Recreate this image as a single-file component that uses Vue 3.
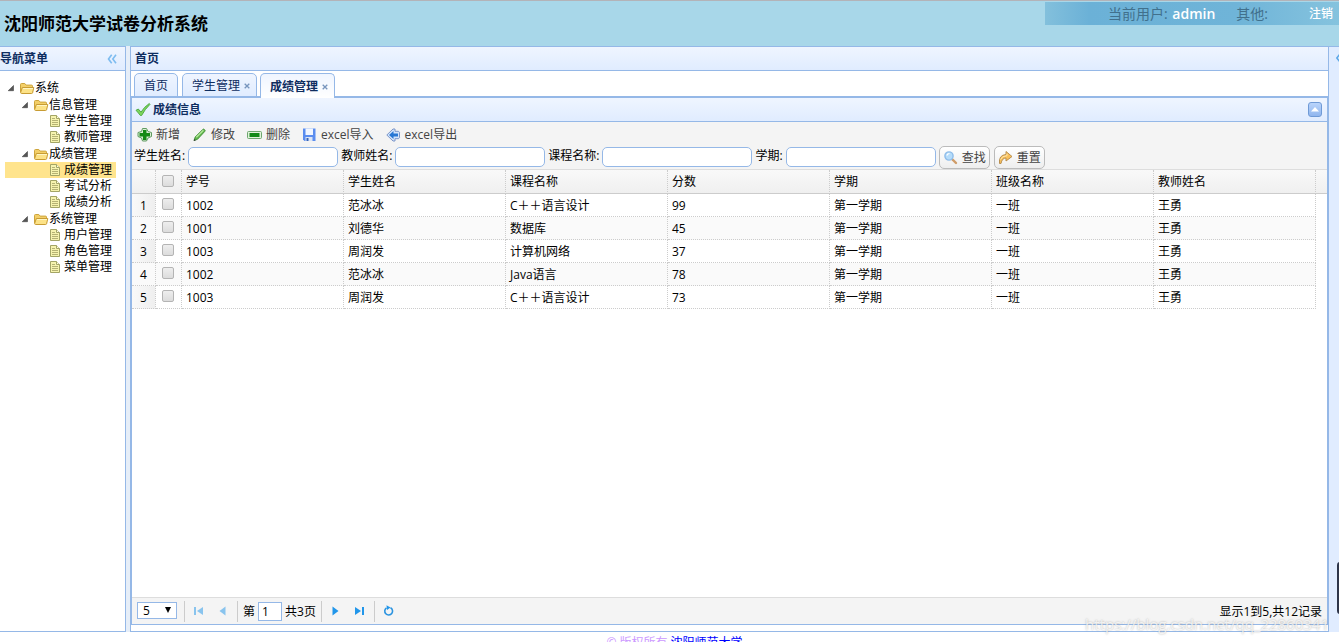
<script setup>
import { ref } from 'vue'

const tree = [
  { label: '系统', level: 0, folder: true },
  { label: '信息管理', level: 1, folder: true },
  { label: '学生管理', level: 2 },
  { label: '教师管理', level: 2 },
  { label: '成绩管理', level: 1, folder: true },
  { label: '成绩管理', level: 2, selected: true },
  { label: '考试分析', level: 2 },
  { label: '成绩分析', level: 2 },
  { label: '系统管理', level: 1, folder: true },
  { label: '用户管理', level: 2 },
  { label: '角色管理', level: 2 },
  { label: '菜单管理', level: 2 }
]

const tabs = [
  { label: '首页', closable: false },
  { label: '学生管理', closable: true },
  { label: '成绩管理', closable: true, active: true }
]

const tools = [
  { icon: 'add', label: '新增' },
  { icon: 'edit', label: '修改' },
  { icon: 'remove', label: '删除' },
  { icon: 'save', label: 'excel导入' },
  { icon: 'back', label: 'excel导出' }
]

const filters = [
  { id: 'student', label: '学生姓名:' },
  { id: 'teacher', label: '教师姓名:' },
  { id: 'course', label: '课程名称:' },
  { id: 'term', label: '学期:' }
]

const columns = ['学号', '学生姓名', '课程名称', '分数', '学期', '班级名称', '教师姓名']
const rows = [
  ['1002', '范冰冰', 'C＋＋语言设计', '99', '第一学期', '一班', '王勇'],
  ['1001', '刘德华', '数据库', '45', '第一学期', '一班', '王勇'],
  ['1003', '周润发', '计算机网络', '37', '第一学期', '一班', '王勇'],
  ['1002', '范冰冰', 'Java语言', '78', '第一学期', '一班', '王勇'],
  ['1003', '周润发', 'C＋＋语言设计', '73', '第一学期', '一班', '王勇']
]

const page = ref('1')
</script>

<template>
  <div class="page">
    <header class="top">
      <h1>沈阳师范大学试卷分析系统</h1>
      <div class="userbar">
        <span>当前用户: <b>admin</b></span>
        <span>其他:</span>
        <a href="#" class="logout">注销</a>
      </div>
    </header>

    <div class="body">
      <nav class="west">
        <div class="phead">
          <span>导航菜单</span>
          <button class="chev" aria-label="收起">
            <svg width="10" height="10" viewBox="0 0 10 10" fill="none" stroke="#7dbcf0" stroke-width="1.6"><path d="M4.7.8 1.500 5l3.200 4.200M9 .8 5.800 5 9 9.200" /></svg>
          </button>
        </div>
        <ul class="tree">
          <li v-for="(n, i) in tree" :key="i" :class="['l' + n.level, { selected: n.selected }]">
            <svg v-if="n.folder" width="14" height="16" viewBox="0 0 14 16"><path d="M8.500 5.500v5.200H3.200z" fill="#555" stroke="#444" stroke-width=".6" /></svg>
            <svg v-if="n.folder" width="16" height="16" viewBox="0 0 16 16">
              <path d="M1.500 12V4.500q0-1 1-1h3.300l1.400 1.600h5.300q1 0 1 1V12z" fill="#f3cf68" stroke="#cda43c" />
              <path d="M1.700 12.300 3.300 7.500h11.500l-1.200 5.300q-.2.700-1 .7H2.500q-.9 0-.8-1.200z" fill="#fce287" stroke="#c89c34" />
              <path d="M4 8.500h10" stroke="#fff6c4" />
            </svg>
            <svg v-else width="16" height="16" viewBox="0 0 16 16">
              <path d="M3.500 2.500h6l3 3v8h-9z" fill="#f6f3ae" stroke="#a3a566" />
              <path d="M9.500 2.500v3h3" fill="#fffde0" stroke="#a3a566" />
              <path d="M5 5.500h3M5 7.500h6M5 9.500h6M5 11.500h6" stroke="#b5b274" />
            </svg>
            <span>{{ n.label }}</span>
          </li>
        </ul>
      </nav>

      <main class="center">
        <div class="phead inset">首页</div>
        <div class="tabs">
          <button v-for="(t, i) in tabs" :key="i" :class="['tab', { active: t.active }]">
            <span>{{ t.label }}</span>
            <svg v-if="t.closable" width="6" height="6" viewBox="0 0 6 6"><path d="M.7.700l4.600 4.600M5.300.7.700 5.300" stroke="#7795bd" stroke-width="1.300" /></svg>
          </button>
        </div>

        <section class="panel">
          <div class="phead inner">
            <svg width="16" height="16" viewBox="0 0 16 16"><path d="M1 8.300 3.300 7 6 10.200Q9 5 14.300 1.500l.7.800Q9.700 7.500 6.600 13.500H5.400Q3.500 11 1 8.300z" fill="#7ed65c" stroke="#45a53c" stroke-width=".9" /></svg>
            <span>成绩信息</span>
            <button class="collapse" aria-label="折叠">
              <svg width="8" height="5" viewBox="0 0 8 5"><path d="M4 0l4 4.500H0z" fill="#fff" /></svg>
            </button>
          </div>

          <div class="toolbar">
            <button v-for="t in tools" :key="t.icon" class="tool">
              <svg v-if="t.icon === 'add'" width="16" height="16" viewBox="0 0 16 16">
                <path d="M5.500 1.500h4l1.500 3 3.500 1v4l-3.500 1.500-1.500 3h-4L4.500 11 1 9.500v-4l3.500-1z" fill="#d9f0d3" stroke="#5f9a60" />
                <path d="M6 3h3.500v3H13v3.500H9.500V13H6V9.500H2.500V6H6z" fill="#148a14" />
              </svg>
              <svg v-else-if="t.icon === 'edit'" width="16" height="16" viewBox="0 0 16 16">
                <path d="M2 13.500l1.200-3.500L10.800 2.400q.8-.7 1.500 0l.5.500q.7.700 0 1.500L5.500 12.300z" fill="#62b94a" stroke="#3f8b38" stroke-width=".9" />
                <path d="M4.300 10.300 11.400 3.300" stroke="#b4e79c" stroke-width="1.200" /><path d="M1.700 14l.7-2 1.400 1.300z" fill="#333" />
              </svg>
              <svg v-else-if="t.icon === 'remove'" width="16" height="16" viewBox="0 0 16 16">
                <rect x=".5" y="4.500" width="14" height="7" rx="1" fill="#e0f2da" stroke="#6ea66e" /><rect x="2.500" y="6" width="10" height="4" fill="#128a17" />
              </svg>
              <svg v-else-if="t.icon === 'save'" width="16" height="16" viewBox="0 0 16 16">
                <path d="M1 1.500h12.500v12.500H2.500L1 12.500z" fill="#5b8def" /><path d="M3.500 1.500h7.500v6.500h-7.500z" fill="#f1f6ff" /><path d="M3.500 10h7v4h-7z" fill="#dce5f5" /><path d="M4.500 11h2v3h-2z" fill="#3665bd" />
              </svg>
              <svg v-else width="16" height="16" viewBox="0 0 16 16">
                <path d="M.8 8 7 2h2v2.300h3.500l1 1v5.400l-1 1H9V14H7z" fill="#d3e4fb" stroke="#7b95c8" /><path d="M3 8 7.500 4v2.500H12v3H7.500V12z" fill="#2877d4" />
              </svg>
              <span>{{ t.label }}</span>
            </button>
          </div>

          <form class="search" @submit.prevent>
            <template v-for="f in filters" :key="f.id">
              <label :for="f.id">{{ f.label }}</label>
              <input :id="f.id" type="text">
            </template>
            <button class="btn">
              <svg width="16" height="16" viewBox="0 0 16 16"><path d="M9.500 9.500l3.500 3.500" stroke="#cf9c68" stroke-width="2.400" stroke-linecap="round" /><circle cx="6" cy="6" r="4.100" fill="#b5dcfa" stroke="#8fbdea" stroke-width="1.400" /><path d="M3.800 5.500Q4.500 3.500 6.500 3.500" fill="none" stroke="#fff" stroke-width="1.200" /></svg>
              <span>查找</span>
            </button>
            <button class="btn" type="reset">
              <svg width="16" height="16" viewBox="0 0 16 16"><path d="M1.500 13.500Q.5 5 8 4.500V1.500l6 5-6 4.500V8Q4 8 3 13.500z" fill="#f8c05c" stroke="#b98f50" /><path d="M2.500 9.500Q4 5.800 9 5.700V3.700" fill="none" stroke="#ffe7ae" /></svg>
              <span>重置</span>
            </button>
          </form>

          <div class="gridwrap">
            <table>
              <colgroup><col class="cn"><col class="cc"><col v-for="c in columns" :key="c"><col class="ce"></colgroup>
              <thead>
                <tr>
                  <th></th>
                  <th class="ck"><input type="checkbox" aria-label="全选"></th>
                  <th v-for="c in columns" :key="c">{{ c }}</th>
                  <th class="end"></th>
                </tr>
              </thead>
              <tbody>
                <tr v-for="(r, i) in rows" :key="i">
                  <td class="num">{{ i + 1 }}</td>
                  <td class="ck"><input type="checkbox" :aria-label="'选择第' + (i + 1) + '行'"></td>
                  <td v-for="(v, j) in r" :key="j">{{ v }}</td>
                  <td class="end"></td>
                </tr>
              </tbody>
            </table>
          </div>

          <div class="pager">
            <span class="size"><select aria-label="每页条数"><option>5</option><option>10</option></select></span>
            <i class="sep"></i>
            <button class="pb off" aria-label="首页"><svg width="10" height="10" viewBox="0 0 10 10"><path d="M0 1h2v8H0zM9 1v8L3 5z" /></svg></button>
            <button class="pb off" aria-label="上一页"><svg width="10" height="10" viewBox="0 0 10 10"><path d="M7.500.500v9L1.500 5z" /></svg></button>
            <i class="sep"></i>
            <label class="goto">第 <input v-model="page" type="text"> 共3页</label>
            <i class="sep"></i>
            <button class="pb" aria-label="下一页"><svg width="10" height="10" viewBox="0 0 10 10"><path d="M1.500.500v9l6-4.500z" /></svg></button>
            <button class="pb" aria-label="末页"><svg width="10" height="10" viewBox="0 0 10 10"><path d="M7 1h2v8H7zM0 1v8l6-4z" /></svg></button>
            <i class="sep"></i>
            <button class="pb" aria-label="刷新"><svg width="12" height="12" viewBox="0 0 12 12"><path d="M7.500 2.700A3.900 3.900 0 1 1 3.500 2.900" fill="none" stroke="#2a93e0" stroke-width="1.600" /><path d="M3.500.3 7.500 2.500 4 5z" /></svg></button>
            <span class="info">显示1到5,共12记录</span>
          </div>
        </section>
      </main>

      <aside class="east">
        <svg width="10" height="10" viewBox="0 0 10 10" fill="none" stroke="#5fa9e8" stroke-width="1.600"><path d="M4.200.8.900 5l3.300 4.200M9 .8 5.300 5 9 9.200" /></svg>
        <i class="thumb"></i>
      </aside>
    </div>

    <footer class="foot">© 版权所有 <a href="#">沈阳师范大学</a></footer>
    <div class="mark">https://blog.csdn.net/qq_22860341</div>
  </div>
</template>

<style>
html, body { margin: 0; overflow: hidden; }
</style>

<style scoped>
* { box-sizing: border-box; }
.page {
  position: relative; height: 100vh; display: flex; flex-direction: column; overflow: hidden;
  font: 12px/16px "Open Sans", "Noto Sans CJK SC", sans-serif; color: #000; background: #fff;
}
button, input, select { font: inherit; color: inherit; margin: 0; padding: 0; }
button { border: 0; background: none; white-space: nowrap; }
svg { flex: none; display: block; }

.top {
  flex: none; height: 46px; display: flex; justify-content: space-between; align-items: flex-start;
  background: #a8d7e9; border-top: 1px solid #b3b3b8;
}
h1 { margin: 0; padding: 10px 4px; font-size: 17px; line-height: 26px; font-weight: 700; }
.userbar {
  display: flex; align-items: center; width: 294px; height: 23px; margin-top: 1px; padding: 0 6px 0 63px;
  background: linear-gradient(90deg, #83c0dc, #6bb1d7 15%, #6fb4d8 65%, #85c3de);
  font-size: 14px; color: #41708c; white-space: nowrap; gap: 21px;
}
.userbar b { margin-left: 1px; color: #fff; font-weight: 600; }
.logout { margin-left: auto; font-size: 12px; color: #fff; text-decoration: none; font-weight: 500; }

.body { flex: 1; min-height: 0; display: flex; background: #e6eef8; }
.west { flex: none; width: 126px; border: 1px solid #95b8e7; border-left: 0; background: #fff; }
.phead {
  flex: none; height: 24px; display: flex; align-items: center; justify-content: space-between;
  background: linear-gradient(#eff5ff, #e0ecff); border-bottom: 1px solid #95b8e7;
  font-weight: 700; color: #0e2d5f;
}
.inset { padding-left: 4px; }
.chev { margin-right: 8px; }
.tree { list-style: none; margin: 9px 9px 0 5px; padding: 0; }
.tree li { display: flex; height: 16px; align-items: center; white-space: nowrap; }
.tree .l1 { height: 17px; padding-left: 14px; }
.tree .l2 { padding-left: 42px; }
.tree .l2 span { margin-left: 1px; }
.tree .selected { background: #ffe48d; }

.center {
  flex: 1; min-width: 0; margin-left: 4px; display: flex; flex-direction: column; background: #fff;
  border: 1px solid #95b8e7; padding-bottom: 6px;
}
.tabs { flex: none; height: 26px; display: flex; align-items: flex-end; gap: 4px; padding-left: 3px; border-bottom: 1px solid #95b8e7; }
.tab {
  height: 24px; display: flex; align-items: center; gap: 4px; padding: 1px 6px 0 9px; margin-bottom: -1px;
  border: 1px solid #95b8e7; border-radius: 5px 5px 0 0; color: #0e2d5f;
  background: linear-gradient(#eff5ff, #e0ecff);
}
.tab:first-child { padding-right: 9px; }
.tab.active { position: relative; height: 25px; margin-bottom: -2px; margin-left: -1px; font-weight: 700; border-bottom: 0; background: linear-gradient(#eff5ff, #fff); }

.panel { flex: 1; min-height: 0; display: flex; flex-direction: column; border: 1px solid #95b8e7; }
.inner { padding: 0 5px 0 3px; gap: 2px; }
.collapse {
  width: 14px; height: 15px; margin-left: auto; display: flex; align-items: center; justify-content: center;
  border: 1px solid #6f9ad6; border-radius: 3px; background: linear-gradient(#b9d4fb, #91b6ee);
}
.toolbar { flex: none; height: 25px; display: flex; align-items: center; gap: 12px; padding-left: 5px; background: #f4f4f4; }
.tool { display: flex; align-items: center; gap: 3px; color: #444; }
.search { flex: none; height: 22px; display: flex; align-items: flex-start; gap: 3px; padding-left: 2px; background: #f4f4f4; }
.search label { white-space: nowrap; line-height: 18px; }
.search input { width: 150px; height: 20px; padding: 0 4px; border: 1px solid #95b8e7; border-radius: 5px; background: #fff; }
.btn {
  height: 23px; margin-top: -1px; display: flex; align-items: center; gap: 3px; padding: 0 3px;
  border: 1px solid #bbb; border-radius: 5px; color: #444; background: linear-gradient(#fff, #eee);
}
.btn + .btn { margin-left: 1px; }

.gridwrap { flex: 1; min-height: 0; overflow: hidden; border-top: 1px solid #ddd; }
table { width: 100%; table-layout: fixed; border-collapse: separate; border-spacing: 0; }
.cn { width: 24px; }
.cc { width: 26px; }
.ce { width: 11px; }
th, td { height: 23px; padding: 0 4px; text-align: left; font-weight: 400; white-space: nowrap; border: 0 dotted #ccc; border-width: 0 1px 1px 0; overflow: hidden; }
td { padding-top: 2px; }
thead tr { background: linear-gradient(#f9f9f9, #efefef); }
th { height: 24px; border-bottom: 1px solid #ccc; }
.end { border-width: 0; }
th.end { border-bottom: 1px solid #ccc; }
tbody tr:nth-child(even) td:not(.end) { background: #fafafa; }
tbody .num, tbody tr:nth-child(even) .num { padding: 2px 0 0; text-align: center; background: linear-gradient(90deg, #f9f9f9, #efefef); }
.ck { padding: 0 1px 0 0; }
.ck input {
  appearance: none; display: block; width: 12px; height: 12px; margin: 0 auto;
  border: 1px solid #b4b4b4; border-radius: 2px; background: linear-gradient(#eee, #dcdcdc);
}
th.ck { padding-bottom: 2px; }
td.ck { padding-bottom: 3px; }

.pager { flex: none; height: 27px; display: flex; align-items: center; padding: 0 5px; background: #f4f4f4; border-top: 1px solid #ddd; }
.size { position: relative; display: flex; margin: 0 5px 2px 0; }
.size select { appearance: none; width: 40px; height: 17px; padding-left: 5px; line-height: 15px; border: 1px solid #95b8e7; border-radius: 0; background: #fff; }
.size::after { content: ""; position: absolute; right: 6px; top: 5px; border: 3px solid transparent; border-top: 6px solid #000; border-bottom: 0; pointer-events: none; }
.sep { width: 1px; height: 21px; margin: 0 2px; background: #ccc; }
.pb { width: 24px; height: 24px; display: flex; align-items: center; justify-content: center; fill: #2196ea; }
.off { opacity: .5; }
.goto { display: flex; align-items: center; gap: 3px; margin: 0 3px; padding-top: 1px; white-space: nowrap; }
.goto input { width: 24px; height: 19px; padding: 0 3px; border: 1px solid #95b8e7; background: #fff; }
.info { margin-left: auto; padding-top: 1px; white-space: nowrap; }

.east { flex: none; position: relative; width: 10px; overflow: hidden; padding: 6px 0 0 7px; background: #e0ecff; border-top: 1px solid #95b8e7; }
.thumb { position: absolute; left: 8px; bottom: 18px; width: 8px; height: 52px; border-radius: 3px; background: #2d3448; }

.foot { flex: none; height: 10px; overflow: hidden; line-height: 22px; text-align: center; color: #c9f; padding-left: 10px; }
.foot a { color: #00f; text-decoration: none; }
.mark {
  position: absolute; right: 10px; bottom: 8px; font-size: 15px; line-height: 20px;
  color: rgba(255, 255, 255, .75); text-shadow: 0 0 2px rgba(120, 120, 120, .6); pointer-events: none;
}
</style>
